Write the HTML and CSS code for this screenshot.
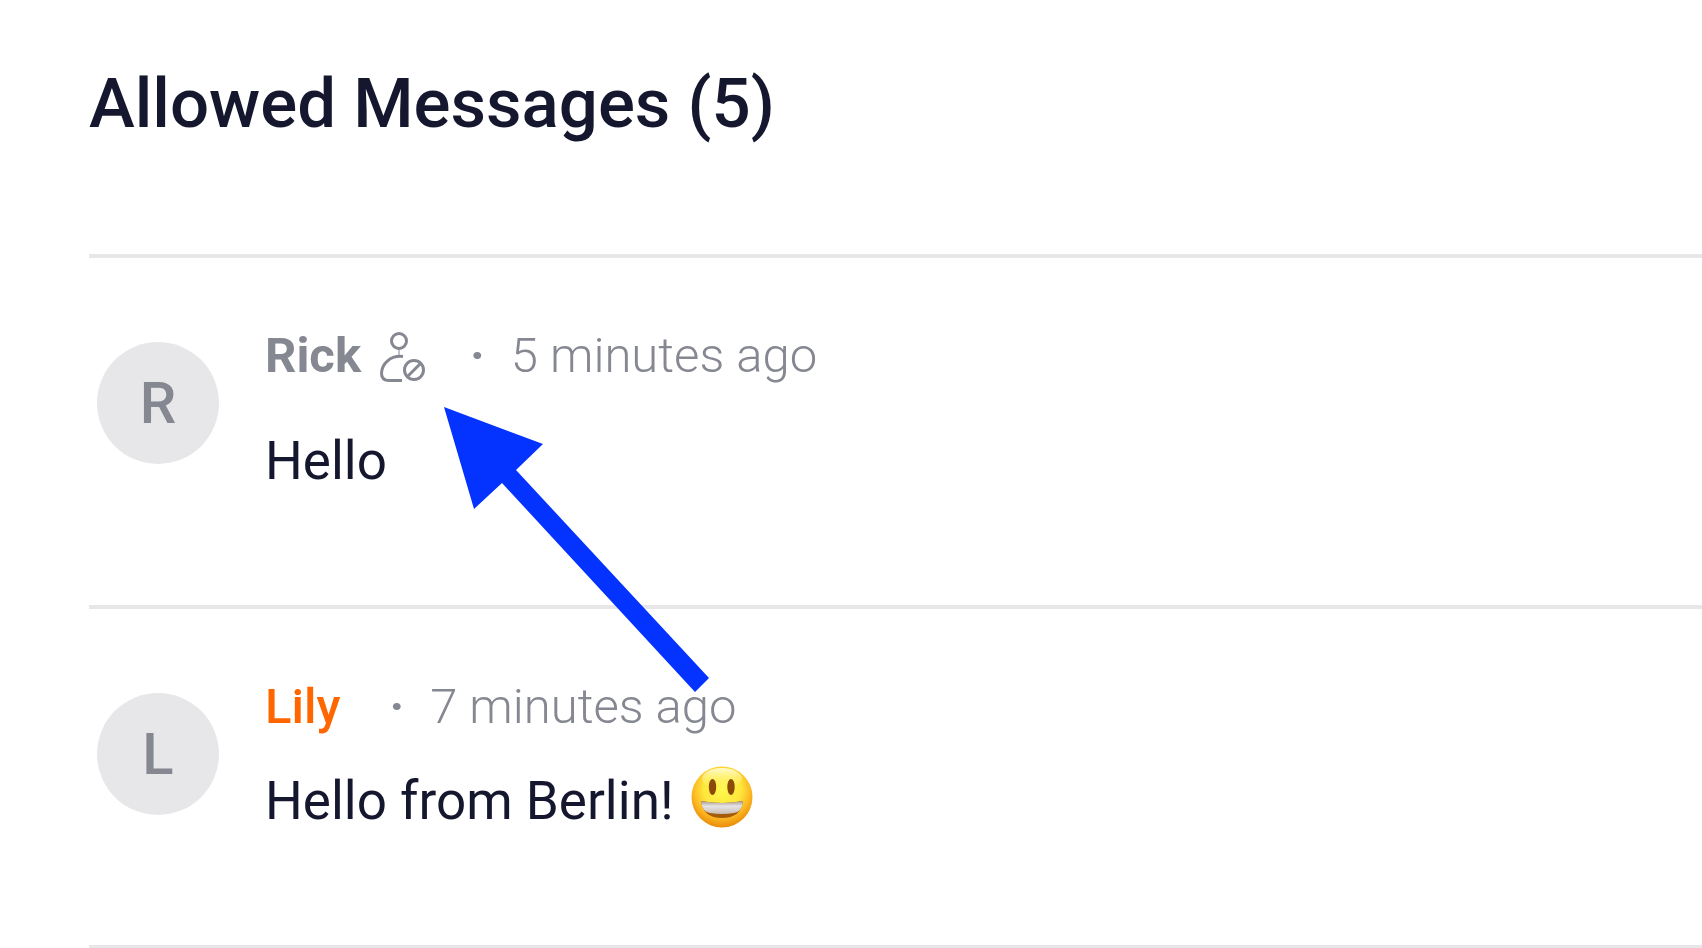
FILE: index.html
```html
<!DOCTYPE html>
<html lang="en">
<head>
<meta charset="utf-8">
<title>Allowed Messages</title>
<link rel="stylesheet" href="styles.css">
</head>
<body>
<main class="panel">
  <h1 class="title">Allowed Messages (5)</h1>
  <ul class="messages">
    <li class="message message-muted">
      <div class="avatar">R</div>
      <div class="body">
        <div class="meta">
          <span class="name">Rick</span>
          <svg class="banned-icon" viewBox="0 0 48 54" role="img" aria-label="Banned user">
            <g fill="none" stroke="#858791" stroke-width="3">
              <circle cx="20" cy="12" r="7.5"/>
              <path d="M20 19.500V26" stroke-width="2" stroke-opacity="0.5"/>
              <path d="M24 27.500C11 26 3 35 2.500 44C2.500 49 5 51.500 10 51.500H23"/>
              <circle cx="35" cy="41" r="9.500"/>
              <path d="M29 47L41 35"/>
            </g>
          </svg>
          <span class="dot">·</span>
          <time class="time">5 minutes ago</time>
        </div>
        <p class="text">Hello</p>
      </div>
    </li>
    <li class="message">
      <div class="avatar">L</div>
      <div class="body">
        <div class="meta">
          <span class="name name-host">Lily</span>
          <span class="dot">·</span>
          <time class="time">7 minutes ago</time>
        </div>
        <p class="text">Hello from Berlin!
          <svg class="emoji" viewBox="0 0 62 62" role="img" aria-label="Smiling face">
            <defs>
              <radialGradient id="face" cx="50%" cy="38%" r="62%">
                <stop offset="0" stop-color="#fff94f"/>
                <stop offset="0.5" stop-color="#ffe63b"/>
                <stop offset="0.75" stop-color="#fcb923"/>
                <stop offset="1" stop-color="#ea8a08"/>
              </radialGradient>
              <linearGradient id="shine" x1="0" y1="0" x2="0" y2="1">
                <stop offset="0" stop-color="#fffbd0"/>
                <stop offset="1" stop-color="#fff45a" stop-opacity="0"/>
              </linearGradient>
              <linearGradient id="teeth" x1="0" y1="0" x2="0" y2="1">
                <stop offset="0" stop-color="#a99a90"/>
                <stop offset="0.4" stop-color="#e6e4e5"/>
                <stop offset="1" stop-color="#c9bcb0"/>
              </linearGradient>
            </defs>
            <circle cx="31" cy="31" r="30.500" fill="url(#face)"/>
            <ellipse cx="31" cy="13" rx="20" ry="11" fill="url(#shine)"/>
            <ellipse cx="21.500" cy="21" rx="3.700" ry="8" fill="#8c4a08"/>
            <ellipse cx="40" cy="21" rx="3.700" ry="8" fill="#8c4a08"/>
            <path d="M10 35Q31 39 52 35Q50 52 31 52Q12 52 10 35Z" fill="#a45c08"/>
            <path d="M10 35Q31 39 52 35Q51 46 43 47Q31 49 19 47Q11 46 10 35Z" fill="url(#teeth)"/>
          </svg>
        </p>
      </div>
    </li>
  </ul>
  <svg class="pointer" viewBox="0 0 265 285" aria-hidden="true">
    <polygon points="0,0 99,37 72,63 265,271 251,285 58,76 30,102" fill="#0433ff"/>
  </svg>
</main>
</body>
</html>
```
FILE: styles.css
```css
* {
  box-sizing: border-box;
}

body {
  margin: 0;
  background: #fff;
  color: #15172f;
  font-family: Roboto, "Liberation Sans", sans-serif;
}

.panel {
  position: relative;
  padding: 64px 0 0 89px;
  overflow: hidden;
}

.title {
  margin: 0;
  padding-bottom: 110px;
  font-size: 69px;
  font-weight: 500;
  line-height: 80px;
}

.messages {
  margin: 0;
  padding: 0;
  list-style: none;
  border-bottom: 4px solid #e7e7e9;
}

.message {
  display: flex;
  gap: 46px;
  padding: 70px 8px 114px;
  border-top: 4px solid #e7e7e9;
}

.avatar {
  display: flex;
  flex: none;
  align-items: center;
  justify-content: center;
  width: 122px;
  height: 122px;
  margin-top: 14px;
  border-radius: 50%;
  background: #e7e7e9;
  color: #858791;
  font-size: 58px;
  font-weight: 500;
}

.body {
  display: flex;
  flex: 1;
  flex-direction: column;
  gap: 32px;
}

.message-muted .body {
  gap: 47px;
}

.meta {
  display: flex;
  align-items: center;
  height: 56px;
  color: #858791;
  font-size: 49px;
  line-height: 56px;
}

.name {
  font-weight: 700;
}

.name-host {
  margin-right: 6px;
  color: #ff6600;
  font-weight: 500;
}

.banned-icon {
  width: 48px;
  height: 54px;
  margin-left: 18px;
}

.dot {
  margin: 0 26px 0 43px;
  font-weight: 700;
}

.time {
  font-weight: 300;
}

.text {
  margin: 0;
  font-size: 53px;
  line-height: 60px;
}

.emoji {
  width: 62px;
  height: 62px;
  margin: -1px 0 -1px 4px;
  vertical-align: -8px;
}

.pointer {
  position: absolute;
  top: 407px;
  left: 444px;
  width: 265px;
  height: 285px;
}
```
